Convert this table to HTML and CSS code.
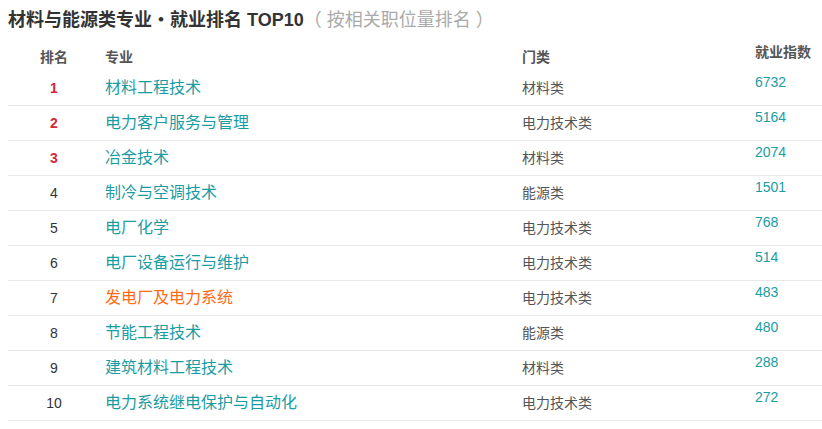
FILE: index.html
```html
<!DOCTYPE html>
<html lang="zh-CN">
<head>
    <meta charset="UTF-8">
    <title>材料与能源类专业就业排名</title>
    <link rel="stylesheet" href="styles.css">
</head>
<body>
    <h2 class="title">材料与能源类专业・就业排名 TOP10<span class="sub">（ 按相关职位量排名 ）</span></h2>

    <div class="rank-table">
        <div class="row head">
            <div class="col-rank">排名</div>
            <div class="col-major">专业</div>
            <div class="col-cat">门类</div>
            <div class="col-index">就业指数</div>
        </div>

        <div class="row">
            <div class="col-rank top">1</div>
            <div class="col-major"><a href="#">材料工程技术</a></div>
            <div class="col-cat">材料类</div>
            <div class="col-index">6732</div>
        </div>
        <div class="row">
            <div class="col-rank top">2</div>
            <div class="col-major"><a href="#">电力客户服务与管理</a></div>
            <div class="col-cat">电力技术类</div>
            <div class="col-index">5164</div>
        </div>
        <div class="row">
            <div class="col-rank top">3</div>
            <div class="col-major"><a href="#">冶金技术</a></div>
            <div class="col-cat">材料类</div>
            <div class="col-index">2074</div>
        </div>
        <div class="row">
            <div class="col-rank">4</div>
            <div class="col-major"><a href="#">制冷与空调技术</a></div>
            <div class="col-cat">能源类</div>
            <div class="col-index">1501</div>
        </div>
        <div class="row">
            <div class="col-rank">5</div>
            <div class="col-major"><a href="#">电厂化学</a></div>
            <div class="col-cat">电力技术类</div>
            <div class="col-index">768</div>
        </div>
        <div class="row">
            <div class="col-rank">6</div>
            <div class="col-major"><a href="#">电厂设备运行与维护</a></div>
            <div class="col-cat">电力技术类</div>
            <div class="col-index">514</div>
        </div>
        <div class="row">
            <div class="col-rank">7</div>
            <div class="col-major"><a href="#" class="hot">发电厂及电力系统</a></div>
            <div class="col-cat">电力技术类</div>
            <div class="col-index">483</div>
        </div>
        <div class="row">
            <div class="col-rank">8</div>
            <div class="col-major"><a href="#">节能工程技术</a></div>
            <div class="col-cat">能源类</div>
            <div class="col-index">480</div>
        </div>
        <div class="row">
            <div class="col-rank">9</div>
            <div class="col-major"><a href="#">建筑材料工程技术</a></div>
            <div class="col-cat">材料类</div>
            <div class="col-index">288</div>
        </div>
        <div class="row">
            <div class="col-rank">10</div>
            <div class="col-major"><a href="#">电力系统继电保护与自动化</a></div>
            <div class="col-cat">电力技术类</div>
            <div class="col-index">272</div>
        </div>
    </div>
</body>
</html>
```

FILE: styles.css
```css
body {
    margin: 0;
    padding: 8px 0 0 8px;
    background-color: #ffffff;
    color: #333333;
    font-family: "Liberation Sans", "Noto Sans CJK SC", sans-serif;
}

.title {
    margin: 0;
    font-size: 18px;
    line-height: 24px;
    font-weight: bold;
    color: #333333;
}

.title .sub {
    font-weight: normal;
    color: #aaaaaa;
}

.rank-table {
    width: 814px;
    margin-top: 7px;
}

.row {
    display: grid;
    grid-template-columns: 92px 417px 233px 72px;
    align-items: center;
    box-sizing: border-box;
    height: 35px;
    border-bottom: 1px solid #e8e8e8;
    font-size: 14px;
    line-height: 20px;
    color: #555555;
}

.row > div {
    padding: 0 5px;
    white-space: nowrap;
}

.row.head {
    height: 32px;
    border-bottom: none;
    font-weight: bold;
}

.row.head > div {
    padding-top: 4px;
}

.row.head .col-index {
    padding-top: 0;
    padding-bottom: 6px;
}

.row .col-rank {
    text-align: center;
    color: #333333;
}

.row.head .col-rank {
    color: #555555;
}

.row .top {
    color: #d4283a;
    font-weight: bold;
}

.row .col-index {
    padding-bottom: 12px;
}

.row:not(.head) .col-index {
    color: #1a9ca3;
}

.col-major a {
    font-size: 16px;
    color: #1a9ca3;
    text-decoration: none;
}

.col-major a.hot {
    color: #ff6a13;
}
```
